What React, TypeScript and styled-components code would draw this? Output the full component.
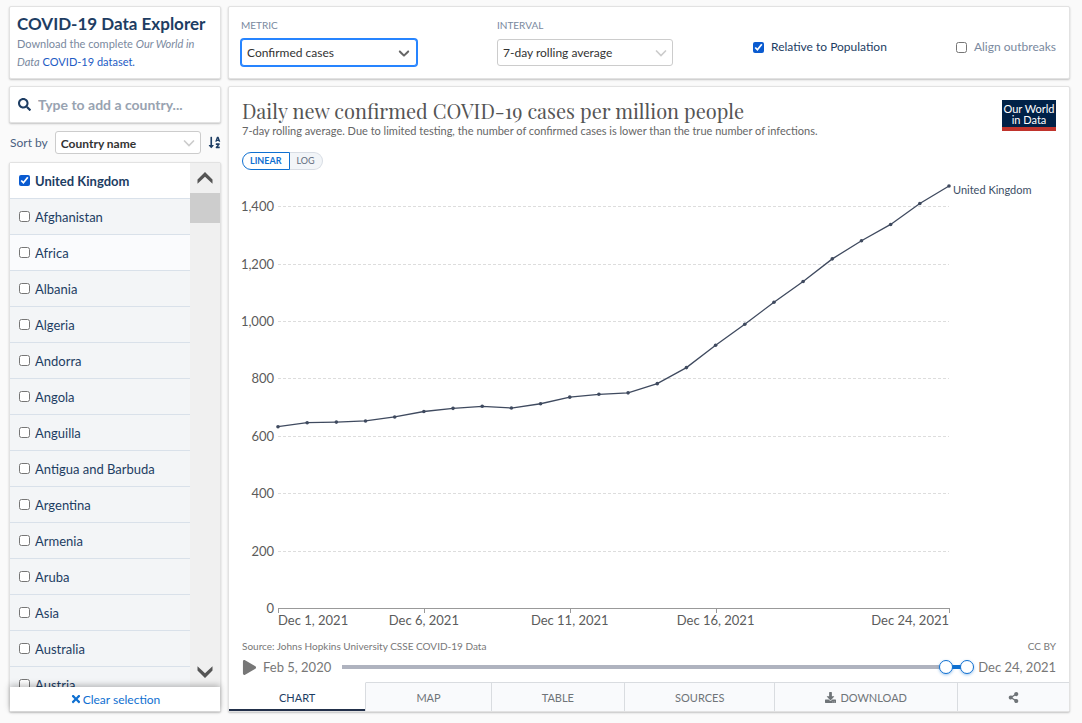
import React, { useLayoutEffect, useRef, useState } from "react";
import styled, { createGlobalStyle, css } from "styled-components";
import { FaDownload, FaPlay, FaSearch, FaShareAlt, FaSortAlphaDown, FaTimes } from "react-icons/fa";

const navy = "#1d3d63";
const blue = "#0f70d1";
const muted = "#7a899e";
const chartGrey = "#5b5b5b";

const GlobalStyle = createGlobalStyle`
  *, *::before, *::after { box-sizing: border-box; }
  body {
    margin: 0;
    background: #fafafa;
    color: ${navy};
    font-family: Lato, "Liberation Sans", sans-serif;
    font-size: 12px;
  }
  button, input, select { font: inherit; color: inherit; }
  button { cursor: pointer; }
`;

const Explorer = styled.main`
  display: grid;
  grid-template-columns: 212px minmax(0, 1fr);
  grid-template-rows: auto minmax(0, 1fr);
  gap: 7px;
  height: 100vh;
  min-height: 480px;
  padding: 6px 12px 11px 9px;
`;

const Card = styled.section`
  background: #fff;
  border: 1px solid #e2e2e2;
  border-radius: 2px;
  box-shadow: 0 1px 2px rgba(0, 0, 0, 0.22);
`;

const Intro = styled(Card)`
  padding: 6px 7px 7px;
`;

const IntroTitle = styled.h1`
  margin: 0;
  font-size: 17px;
  line-height: 22px;
  font-weight: 700;
  white-space: nowrap;
`;

const IntroText = styled.p`
  margin: 0;
  font-size: 11px;
  line-height: 18px;
  color: ${muted};

  a {
    color: #1d5bc4;
    text-decoration: none;
  }
`;

const Controls = styled(Card)`
  display: flex;
  align-items: center;
  gap: 20px;
  padding: 0 13px 0 12px;
`;

const Field = styled.div`
  display: flex;
  flex: none;
  flex-direction: column;
  gap: 7px;
  width: 176px;
  margin: 0 60px 1px 0;
`;

const FieldLabel = styled.label`
  font-size: 10px;
  line-height: 14px;
  color: ${muted};
  text-transform: uppercase;
`;

const SelectFrame = styled.div`
  display: grid;
  flex: 1;
  align-items: center;

  > * {
    grid-area: 1 / 1;
  }

  svg {
    justify-self: end;
    margin-right: 4px;
    pointer-events: none;
  }
`;

const SelectBox = styled.select<{ $active?: boolean; $strong?: boolean; $height: number }>`
  appearance: none;
  width: 100%;
  height: ${(p) => p.$height}px;
  padding: 0 24px 0 5px;
  border: 1px solid #ccc;
  border-radius: 3px;
  outline: none;
  background: #fff;
  color: #333;
  font-weight: ${(p) => (p.$strong ? 700 : 400)};
  ${(p) =>
    p.$active &&
    css`
      border-color: #2684ff;
      box-shadow: 0 0 0 1px #2684ff;
    `}
`;

const CheckLabel = styled.label<{ $muted?: boolean }>`
  display: flex;
  align-items: center;
  gap: 7px;
  line-height: 18px;
  white-space: nowrap;
  color: ${(p) => (p.$muted ? muted : navy)};
`;

const Tick = styled.input`
  flex: none;
  width: 11px;
  height: 11px;
  margin: 0;
  accent-color: #0a5bd0;
`;

const ControlCheck = styled(CheckLabel)`
  align-self: flex-start;
  margin-top: 31px;

  &:last-child {
    margin-left: auto;
  }
`;

const Picker = styled.aside`
  display: flex;
  flex-direction: column;
  min-height: 0;
`;

const SearchBox = styled(Card).attrs({ as: "label" })`
  display: flex;
  align-items: center;
  gap: 7px;
  height: 37px;
  padding: 0 8px;

  svg {
    flex: none;
    font-size: 13px;
  }
`;

const SearchInput = styled.input`
  flex: 1;
  min-width: 0;
  padding: 0;
  border: 0;
  outline: none;
  background: none;
  font-size: 14px;
  font-weight: 700;

  &::placeholder {
    color: #98a3b1;
  }
`;

const SortRow = styled.div`
  display: flex;
  align-items: center;
  gap: 7px;
  margin: 8px 0;
  padding-left: 1px;
  line-height: 23px;
  color: #4a6080;
`;

const SortButton = styled.button`
  display: flex;
  padding: 0;
  border: 0;
  background: none;
  color: ${navy};
  font-size: 13px;
`;

const ListCard = styled(Card)`
  display: flex;
  flex: 1;
  flex-direction: column;
  min-height: 0;
`;

const ListBody = styled.div`
  display: flex;
  flex: 1;
  min-height: 0;
`;

const CountryList = styled.ul`
  flex: 1;
  margin: 0;
  padding: 0;
  overflow: hidden;
  list-style: none;
`;

const CountryItem = styled.li<{ $tone?: string }>`
  height: 36px;
  padding: 0 9px;
  border-bottom: 1px solid #d9e1ea;
  background: ${(p) => p.$tone ?? "#f3f5f7"};
`;

const CountryLabel = styled(CheckLabel)<{ $picked?: boolean }>`
  gap: 5px;
  height: 100%;
  font-size: 13px;
  font-weight: ${(p) => (p.$picked ? 700 : 400)};
`;

const ScrollTrack = styled.div`
  display: flex;
  flex: none;
  flex-direction: column;
  width: 30px;
  background: #f0f0f0;
`;

const ScrollButton = styled.button`
  display: flex;
  align-items: center;
  justify-content: center;
  height: 30px;
  padding: 0;
  border: 0;
  background: none;
  color: #555;
`;

const ScrollThumb = styled.div`
  height: 30px;
  margin-bottom: auto;
  background: #cdcdcd;
`;

const ClearButton = styled.button`
  display: flex;
  align-items: center;
  justify-content: center;
  gap: 1px;
  height: 24px;
  padding: 0;
  border: 0;
  background: #fff;
  box-shadow: 0 -2px 6px rgba(0, 0, 0, 0.25);
  color: ${blue};
`;

const Figure = styled(Card)`
  display: flex;
  flex-direction: column;
  min-height: 0;
`;

const FigureBody = styled.div`
  display: flex;
  flex: 1;
  flex-direction: column;
  min-height: 0;
  padding: 11px 13px 0;
`;

const FigureHeader = styled.header`
  display: flex;
  align-items: flex-start;
  justify-content: space-between;
`;

const FigureTitle = styled.h2`
  margin: 0;
  color: #555;
  font-family: "Playfair Display", "Liberation Serif", serif;
  font-size: 20px;
  line-height: 25px;
  font-weight: 400;
`;

const FigureSubtitle = styled.p`
  margin: 0;
  color: #666;
  font-size: 11px;
  line-height: 15px;
`;

const Logo = styled.a`
  flex: none;
  width: 54px;
  margin-top: 2px;
  padding: 3px 0 2px;
  border-bottom: 4px solid #c0332c;
  background: #002147;
  color: #fff;
  font-size: 11px;
  line-height: 11px;
  text-align: center;
  text-decoration: none;
`;

const ScaleToggle = styled.div`
  display: flex;
  margin-top: 14px;
`;

const ScaleButton = styled.button<{ $on?: boolean }>`
  height: 18px;
  padding: 0 7px;
  border: 1px solid ${(p) => (p.$on ? blue : "#d8dde4")};
  border-left-width: ${(p) => (p.$on ? 1 : 0)}px;
  border-radius: ${(p) => (p.$on ? "9px 0 0 9px" : "0 9px 9px 0")};
  background: ${(p) => (p.$on ? "#fff" : "#f2f5f8")};
  color: ${(p) => (p.$on ? blue : "#5f6b7c")};
  font-size: 9px;
  line-height: 16px;
  font-weight: ${(p) => (p.$on ? 700 : 400)};
`;

const ChartArea = styled.div`
  flex: 1;
  min-height: 0;

  svg {
    display: block;
    overflow: visible;
  }

  text {
    fill: ${chartGrey};
    font-size: 13px;
  }

  .series {
    fill: #3c4e66;
    font-size: 11px;
  }
`;

const SourceRow = styled.div`
  display: flex;
  justify-content: space-between;
  margin-top: 8px;
  color: #777;
  font-size: 10px;
  line-height: 12px;
`;

const Timeline = styled.div`
  display: flex;
  align-items: center;
  height: 30px;
  color: #777;
  font-size: 13px;
`;

const PlayButton = styled.button`
  display: flex;
  margin-right: 6px;
  padding: 0;
  border: 0;
  background: none;
  font-size: 15px;
`;

const RangeSlider = styled.div`
  display: grid;
  flex: 1;
  align-items: center;
  height: 16px;
  margin: 0 4px;

  > * {
    grid-area: 1 / 1;
  }
`;

const RangeTrack = styled.div`
  height: 4px;
  margin: 0 7px;
  background: #afb3bf;
`;

const RangeFill = styled.div`
  height: 100%;
  background: ${blue};
`;

const RangeHandle = styled.input`
  appearance: none;
  width: 100%;
  height: 14px;
  margin: 0;
  background: none;
  pointer-events: none;

  &::-webkit-slider-thumb {
    appearance: none;
    width: 14px;
    height: 14px;
    border: 1px solid ${blue};
    border-radius: 50%;
    background: #fff;
    box-shadow: 0 1px 3px rgba(15, 112, 209, 0.4);
    pointer-events: auto;
  }
`;

const Tabs = styled.nav`
  display: flex;
`;

const Tab = styled.button<{ $on?: boolean }>`
  display: flex;
  flex: 1 1 auto;
  align-items: center;
  justify-content: center;
  gap: 4px;
  height: 29px;
  padding: 0;
  border: 0;
  border-top: 1px solid ${(p) => (p.$on ? "transparent" : "#d9dce0")};
  border-right: 1px solid #d9dce0;
  background: ${(p) => (p.$on ? "#fff" : "#f9fafc")};
  color: ${(p) => (p.$on ? navy : "#6f7478")};
  font-size: 11px;
  ${(p) => p.$on && css`box-shadow: inset 0 -2px 0 #22304a;`}

  &:last-child {
    border-right: 0;
  }
`;

function Chevron({ size, color }: { size: number; color: string }) {
  return (
    <svg width={size} height={size} viewBox="0 0 20 20" fill={color} aria-hidden="true">
      <path d="M4.516 7.548c.436-.446 1.043-.481 1.576 0L10 11.295l3.908-3.747c.533-.481 1.141-.446 1.574 0 .436.445.408 1.197 0 1.615-.406.418-4.695 4.502-4.695 4.502-.217.223-.502.335-.787.335s-.57-.112-.789-.335c0 0-4.287-4.084-4.695-4.502s-.436-1.17 0-1.615z" />
    </svg>
  );
}

function ThinChevron() {
  return (
    <svg width="16" height="16" viewBox="0 0 16 16" fill="none" stroke="#ccc" strokeWidth="1.7" aria-hidden="true">
      <path d="M3.5 6 8 10.5 12.5 6" strokeLinecap="round" />
    </svg>
  );
}

function ScrollArrow({ up }: { up?: boolean }) {
  return (
    <svg width="16" height="14" viewBox="0 0 16 14" fill="currentColor" aria-hidden="true">
      <path d={up ? "M8 1 15.5 8.5V12.7L8 5.7.5 12.7V8.5Z" : "M8 13 15.5 5.5V1.3L8 8.3.5 1.3V5.5Z"} />
    </svg>
  );
}

const cases = [
  632, 646, 648, 652, 666, 685, 696, 703, 697, 712, 735, 745, 750, 782, 838, 916, 989, 1066, 1138,
  1217, 1280, 1337, 1410, 1471,
];
const yTicks = [0, 200, 400, 600, 800, 1000, 1200, 1400];
const xTicks = [1, 6, 11, 16, 24];

function LineChart() {
  const area = useRef<HTMLDivElement>(null);
  const [size, setSize] = useState({ width: 814, height: 460 });

  useLayoutEffect(() => {
    const node = area.current;
    if (!node) return;
    const measure = () => setSize({ width: node.clientWidth, height: node.clientHeight });
    measure();
    const observer = new ResizeObserver(measure);
    observer.observe(node);
    return () => observer.disconnect();
  }, []);

  const left = 36;
  const right = size.width - 107;
  const top = 16;
  const bottom = size.height - 24;
  const x = (day: number) => left + ((day - 1) / 23) * (right - left);
  const y = (value: number) => bottom - (value / 1471) * (bottom - top);
  const crisp = (n: number) => Math.round(n) + 0.5;
  const points = cases.map((value, i) => [x(i + 1), y(value)]);

  return (
    <ChartArea ref={area}>
      <svg width={size.width} height={size.height} role="img" aria-label="Daily new confirmed cases, United Kingdom">
        {yTicks.map((tick) => (
          <g key={tick}>
            {tick > 0 && (
              <line x1={left} x2={right} y1={crisp(y(tick))} y2={crisp(y(tick))} stroke="#ddd" strokeDasharray="3 2" />
            )}
            <text x={left - 4} y={Math.round(y(tick)) + 5} textAnchor="end">
              {tick.toLocaleString("en-US")}
            </text>
          </g>
        ))}
        <line x1={left} x2={right + 1} y1={crisp(bottom)} y2={crisp(bottom)} stroke="#999" />
        {xTicks.map((day) => (
          <g key={day}>
            <line x1={crisp(x(day))} x2={crisp(x(day))} y1={bottom} y2={bottom + 5} stroke="#999" />
            <text x={x(day)} y={bottom + 17} textAnchor={day === 1 ? "start" : day === 24 ? "end" : "middle"}>
              {`Dec ${day}, 2021`}
            </text>
          </g>
        ))}
        <polyline points={points.map((p) => p.join(",")).join(" ")} fill="none" stroke="#3f4a5f" strokeWidth="1.3" />
        {points.map(([cx, cy]) => (
          <circle key={cx} cx={cx} cy={cy} r="1.8" fill="#3f4a5f" />
        ))}
        <text className="series" x={right + 4} y={y(1471) + 8}>
          United Kingdom
        </text>
      </svg>
    </ChartArea>
  );
}

const countries = [
  "United Kingdom", "Afghanistan", "Africa", "Albania", "Algeria", "Andorra", "Angola", "Anguilla",
  "Antigua and Barbuda", "Argentina", "Armenia", "Aruba", "Asia", "Australia", "Austria",
];

function CountryPicker() {
  return (
    <Picker>
      <SearchBox>
        <FaSearch />
        <SearchInput type="text" placeholder="Type to add a country..." aria-label="Type to add a country" />
      </SearchBox>
      <SortRow>
        <label htmlFor="sort">Sort by</label>
        <SelectFrame>
          <SelectBox id="sort" $height={23} $strong>
            <option>Country name</option>
          </SelectBox>
          <ThinChevron />
        </SelectFrame>
        <SortButton aria-label="Sort ascending">
          <FaSortAlphaDown />
        </SortButton>
      </SortRow>
      <ListCard>
        <ListBody>
          <CountryList>
            {countries.map((name, i) => (
              <CountryItem key={name} $tone={i === 0 ? "#fff" : i === 2 ? "#fafbfd" : undefined}>
                <CountryLabel $picked={i === 0}>
                  <Tick type="checkbox" defaultChecked={i === 0} />
                  {name}
                </CountryLabel>
              </CountryItem>
            ))}
          </CountryList>
          <ScrollTrack>
            <ScrollButton aria-label="Scroll up">
              <ScrollArrow up />
            </ScrollButton>
            <ScrollThumb />
            <ScrollButton aria-label="Scroll down">
              <ScrollArrow />
            </ScrollButton>
          </ScrollTrack>
        </ListBody>
        <ClearButton>
          <FaTimes />
          Clear selection
        </ClearButton>
      </ListCard>
    </Picker>
  );
}

const totalDays = 688;

function DateRange() {
  const [start, setStart] = useState(665);
  const [end, setEnd] = useState(totalDays);
  const from = (start / totalDays) * 100;
  const to = (end / totalDays) * 100;
  return (
    <Timeline>
      <PlayButton aria-label="Play">
        <FaPlay />
      </PlayButton>
      <span>Feb 5, 2020</span>
      <RangeSlider>
        <RangeTrack>
          <RangeFill style={{ marginLeft: `${from}%`, width: `${to - from}%` }} />
        </RangeTrack>
        <RangeHandle
          type="range"
          aria-label="Start date"
          max={totalDays}
          value={start}
          onChange={(e) => setStart(Math.min(Number(e.target.value), end))}
        />
        <RangeHandle
          type="range"
          aria-label="End date"
          max={totalDays}
          value={end}
          onChange={(e) => setEnd(Math.max(Number(e.target.value), start))}
        />
      </RangeSlider>
      <span>Dec 24, 2021</span>
    </Timeline>
  );
}

export default function App() {
  return (
    <>
      <GlobalStyle />
      <Explorer>
        <Intro>
          <IntroTitle>COVID-19 Data Explorer</IntroTitle>
          <IntroText>
            Download the complete <em>Our World in Data</em> <a href="#dataset">COVID-19 dataset.</a>
          </IntroText>
        </Intro>
        <Controls>
          <Field>
            <FieldLabel htmlFor="metric">Metric</FieldLabel>
            <SelectFrame>
              <SelectBox id="metric" $height={27} $active>
                <option>Confirmed cases</option>
              </SelectBox>
              <Chevron size={18} color="#666" />
            </SelectFrame>
          </Field>
          <Field>
            <FieldLabel htmlFor="interval">Interval</FieldLabel>
            <SelectFrame>
              <SelectBox id="interval" $height={27}>
                <option>7-day rolling average</option>
              </SelectBox>
              <ThinChevron />
            </SelectFrame>
          </Field>
          <ControlCheck>
            <Tick type="checkbox" defaultChecked />
            Relative to Population
          </ControlCheck>
          <ControlCheck $muted>
            <Tick type="checkbox" />
            Align outbreaks
          </ControlCheck>
        </Controls>
        <CountryPicker />
        <Figure>
          <FigureBody>
            <FigureHeader>
              <div>
                <FigureTitle>Daily new confirmed COVID-19 cases per million people</FigureTitle>
                <FigureSubtitle>
                  7-day rolling average. Due to limited testing, the number of confirmed cases is lower than the true
                  number of infections.
                </FigureSubtitle>
              </div>
              <Logo href="#home">
                Our World
                <br />
                in Data
              </Logo>
            </FigureHeader>
            <ScaleToggle>
              <ScaleButton $on>LINEAR</ScaleButton>
              <ScaleButton>LOG</ScaleButton>
            </ScaleToggle>
            <LineChart />
            <SourceRow>
              <span>Source: Johns Hopkins University CSSE COVID-19 Data</span>
              <span>CC BY</span>
            </SourceRow>
            <DateRange />
          </FigureBody>
          <Tabs>
            <Tab $on>CHART</Tab>
            <Tab>MAP</Tab>
            <Tab>TABLE</Tab>
            <Tab>SOURCES</Tab>
            <Tab>
              <FaDownload />
              DOWNLOAD
            </Tab>
            <Tab aria-label="Share">
              <FaShareAlt />
            </Tab>
          </Tabs>
        </Figure>
      </Explorer>
    </>
  );
}
